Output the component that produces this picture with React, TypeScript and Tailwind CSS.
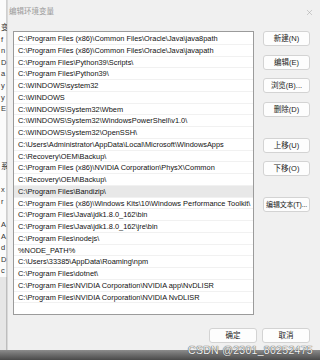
import { X } from 'lucide-react'

const paths = [
  'C:\\Program Files (x86)\\Common Files\\Oracle\\Java\\java8path',
  'C:\\Program Files (x86)\\Common Files\\Oracle\\Java\\javapath',
  'C:\\Program Files\\Python39\\Scripts\\',
  'C:\\Program Files\\Python39\\',
  'C:\\WINDOWS\\system32',
  'C:\\WINDOWS',
  'C:\\WINDOWS\\System32\\Wbem',
  'C:\\WINDOWS\\System32\\WindowsPowerShell\\v1.0\\',
  'C:\\WINDOWS\\System32\\OpenSSH\\',
  'C:\\Users\\Administrator\\AppData\\Local\\Microsoft\\WindowsApps',
  'C:\\Recovery\\OEM\\Backup\\',
  'C:\\Program Files (x86)\\NVIDIA Corporation\\PhysX\\Common',
  'C:\\Recovery\\OEM\\Backup\\',
  'C:\\Program Files\\Bandizip\\',
  'C:\\Program Files (x86)\\Windows Kits\\10\\Windows Performance Toolkit\\',
  'C:\\Program Files\\Java\\jdk1.8.0_162\\bin',
  'C:\\Program Files\\Java\\jdk1.8.0_162\\jre\\bin',
  'C:\\Program Files\\nodejs\\',
  '%NODE_PATH%',
  'C:\\Users\\33385\\AppData\\Roaming\\npm',
  'C:\\Program Files\\dotnet\\',
  'C:\\Program Files\\NVIDIA Corporation\\NVIDIA app\\NvDLISR',
  'C:\\Program Files\\NVIDIA Corporation\\NVIDIA NvDLISR',
]

// bits of the window behind the dialog, cut off by its left edge
const behind = ['变', 'f', 'n', 'D', 'a', 'y', 'y', 'E', '', '', '', '', '系', '', 'x', 'r', '', 'A', 'A', 'd', 'D', 'c']

const Btn = ({ label, className = '' }: { label: string; className?: string }) => (
  <button className={`w-[47px] h-[15px] rounded-[3px] border border-[#d3d3d3] bg-[#fdfdfd] text-[7.5px] leading-none text-[#1b1b1b] whitespace-nowrap flex items-center justify-center ${className}`}>
    {label}
  </button>
)

export default function App() {
  return (
    <div
      className="w-[320px] h-[360px] relative overflow-hidden flex flex-col bg-[#3b3b3b]"
      style={{ fontFamily: '"Liberation Sans", "Noto Sans CJK SC", sans-serif' }}
    >
      <div className="h-[350px] flex">
        {/* window behind */}
        <div className="w-[7px] flex flex-col overflow-hidden">
          <div className="h-[277px] bg-[#fbfbfb] border-r border-[#cfcfcf] pt-[22px] flex flex-col">
            {behind.map((c, i) => (
              <div key={i} className="h-[11.6px] text-[7.5px] leading-[11.6px] text-[#333] pl-[1px] whitespace-nowrap">
                {c}
              </div>
            ))}
          </div>
          <div className="flex-1 bg-[#e6e6e6] border-r border-[#bdbdbd]" />
        </div>

        {/* dialog */}
        <div className="flex-1 bg-[#f0f0f0] border-l border-[#d8d8d8] flex flex-col">
          <div className="h-[24px] flex items-center justify-between pl-[1px] pr-[6px]">
            <span className="text-[7.5px] text-[#9a9a9a]">编辑环境变量</span>
            <X className="w-[9px] h-[9px] text-[#9a9a9a]" strokeWidth={1.2} />
          </div>

          <div className="flex pl-[5px] pt-[7px]">
            <div className="w-[241px] h-[284px] bg-white border border-[#9b9b9b] pt-[1px] overflow-hidden">
              {paths.map((p, i) => (
                <div
                  key={i}
                  className={`h-[11.75px] border-b border-[#f1f1f1] pl-[4px] text-[7.4px] leading-[11px] text-[#111] whitespace-nowrap ${i === 13 ? 'bg-[#e8e8e8]' : ''}`}
                >
                  {p}
                </div>
              ))}
            </div>

            <div className="ml-[9px] flex flex-col">
              <Btn label="新建(N)" />
              <Btn label="编辑(E)" className="mt-[9px]" />
              <Btn label="浏览(B)..." className="mt-[8px]" />
              <Btn label="删除(D)" className="mt-[9px]" />
              <Btn label="上移(U)" className="mt-[21px]" />
              <Btn label="下移(O)" className="mt-[8px]" />
              <Btn label="编辑文本(T)..." className="mt-[21px] text-[7px] tracking-[-0.2px]" />
            </div>
          </div>

          <div className="flex justify-end gap-[5px] pr-[10px] mt-[13px]">
            <Btn label="确定" className="w-[48px]" />
            <Btn label="取消" className="w-[48px]" />
          </div>
        </div>
      </div>

      <div className="flex-1 bg-gradient-to-b from-[#8c8c8c] to-[#4a4a4a]" />

      <div
        className="absolute right-[7px] bottom-[5px] text-[10.5px] leading-none text-[#f2f2f2] tracking-[0.3px]"
        style={{ textShadow: '0 0 1px #444, 0 0 1px #444' }}
      >
        CSDN @2301_80252475
      </div>
    </div>
  )
}
